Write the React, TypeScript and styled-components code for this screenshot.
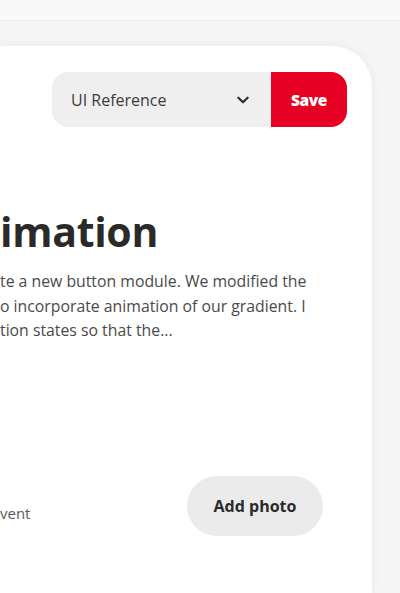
import React from "react";
import styled, { createGlobalStyle } from "styled-components";

const GlobalStyle = createGlobalStyle`
  html, body {
    margin: 0;
    padding: 0;
    height: 100%;
    overflow: hidden;
    background: #f4f4f4;
    font-family: "Open Sans", "Noto Sans", "Liberation Sans", sans-serif;
  }
  #root {
    height: 100%;
  }
`;

const Page = styled.div`
  display: flex;
  flex-direction: column;
  height: 100%;
`;

const TopBar = styled.div`
  height: 20px;
  background: #f9f9f9;
  border-bottom: 1px solid #ececec;
  flex-shrink: 0;
`;

const Stage = styled.div`
  flex: 1;
  display: flex;
  padding: 25px 28px 0 0;
  background: #f5f5f5;
`;

const Card = styled.div`
  flex: 1;
  display: flex;
  flex-direction: column;
  background: #fff;
  border-radius: 0 40px 0 0;
  box-shadow: 0 0 10px rgba(0, 0, 0, 0.06);
`;

const Toolbar = styled.div`
  display: flex;
  justify-content: flex-end;
  padding: 26px 25px 0 0;
`;

const BoardSelect = styled.div`
  display: flex;
  height: 55px;
  border-radius: 16px;
  overflow: hidden;
`;

const SelectField = styled.div`
  width: 219px;
  display: flex;
  align-items: center;
  justify-content: space-between;
  padding: 0 20px 0 19px;
  box-sizing: border-box;
  background: #efefef;
  color: #3b3b3b;
  font-size: 16px;
`;

const SaveButton = styled.button`
  width: 76px;
  border: 0;
  background: #e60023;
  color: #fff;
  font-family: inherit;
  font-size: 15.5px;
  font-weight: 800;
  letter-spacing: -0.4px;
  cursor: pointer;
`;

const Body = styled.div`
  display: flex;
  flex-direction: column;
  padding-top: 78px;
`;

const Title = styled.h1`
  margin: 0;
  font-size: 41px;
  line-height: 52px;
  font-weight: 700;
  color: #2a2a2a;
  letter-spacing: -0.3px;
`;

const Description = styled.p`
  margin: 12px 0 0;
  font-size: 15.8px;
  line-height: 24.5px;
  color: #4a4a4a;
`;

const Footer = styled.div`
  display: flex;
  align-items: center;
  justify-content: space-between;
  padding: 0 49px 0 0;
  margin-top: 133px;
`;

const Meta = styled.span`
  font-size: 15px;
  color: #5a5a5a;
  padding-top: 14px;
`;

const AddPhoto = styled.button`
  width: 136px;
  height: 60px;
  border: 0;
  border-radius: 30px;
  background: #ebebeb;
  color: #2a2a2a;
  font-family: inherit;
  font-size: 16px;
  font-weight: 700;
  cursor: pointer;
`;

const Chevron = () => (
  <svg width="16" height="16" viewBox="0 0 24 24" fill="none">
    <path d="M5 8.5l7 7 7-7" stroke="#2a2a2a" strokeWidth="3.2" strokeLinecap="round" strokeLinejoin="round" />
  </svg>
);

export default function App() {
  return (
    <>
      <GlobalStyle />
      <Page>
        <TopBar />
        <Stage>
          <Card>
            <Toolbar>
              <BoardSelect>
                <SelectField>
                  <span>UI Reference</span>
                  <Chevron />
                </SelectField>
                <SaveButton>Save</SaveButton>
              </BoardSelect>
            </Toolbar>
            <Body>
              <Title>imation</Title>
              <Description>
                te a new button module. We modified the
                <br />
                o incorporate animation of our gradient. I
                <br />
                tion states so that the...
              </Description>
              <Footer>
                <Meta>vent</Meta>
                <AddPhoto>Add photo</AddPhoto>
              </Footer>
            </Body>
          </Card>
        </Stage>
      </Page>
    </>
  );
}
